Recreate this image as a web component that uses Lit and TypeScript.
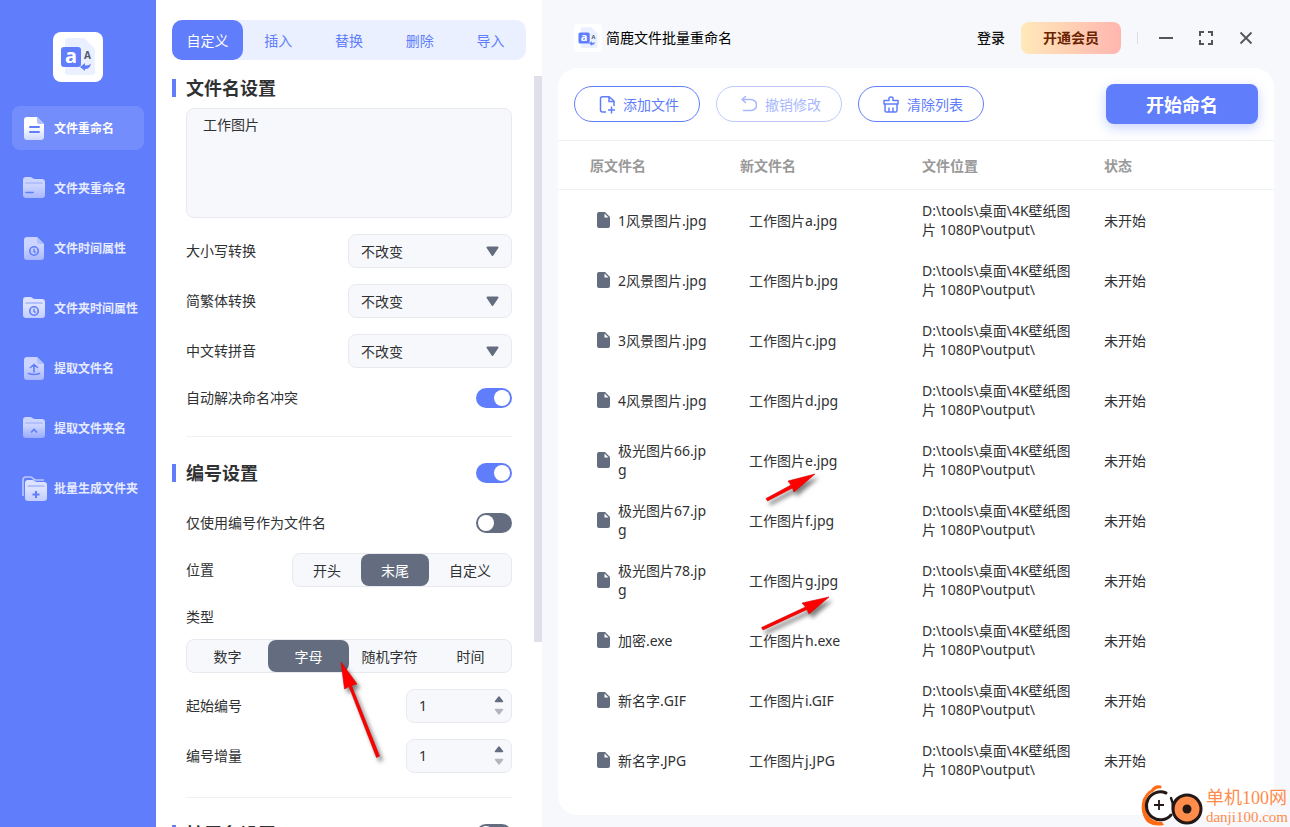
import { LitElement, html, css, svg } from "lit";
import { customElement, property, state } from "lit/decorators.js";
import { classMap } from "lit/directives/class-map.js";

const docBody = svg`
  <path d="M5 1H15L22 8V21A3 3 0 0 1 19 24H5A3 3 0 0 1 2 21V4A3 3 0 0 1 5 1Z" fill="url(#g)"/>
  <path d="M15 1L22 8H17A2 2 0 0 1 15 6Z" fill="#b3c0fe"/>`;
const folderBody = svg`
  <path d="M4 1H8Q9.500 1 10.500 2T13 3H20A3 3 0 0 1 23 6V19A3 3 0 0 1 20 22H4A3 3 0 0 1 1 19V4A3 3 0 0 1 4 1Z" fill="url(#g)"/>
  <path d="M3 8Q3 6 5 6H19Q21 6 21 8" fill="#b3c0fe"/>`;
const clock = svg`
  <circle cx="12" cy="15" r="4.200" fill="none" stroke="#607dfb" stroke-width="1.600"/>
  <path d="M12 12.800V15.300L13.600 16.600" fill="none" stroke="#607dfb" stroke-width="1.400"/>`;

const glyphs: Record<string, unknown> = {
  doc: svg`${docBody}<path d="M8 11H17M8 16H17" stroke="#607dfb" stroke-width="2" stroke-linecap="round"/>`,
  folder: svg`${folderBody}<path d="M4 16.500H11" stroke="#607dfb" stroke-width="1.600" stroke-linecap="round"/>`,
  docTime: svg`${docBody}${clock}`,
  folderTime: svg`${folderBody}${clock}`,
  docOut: svg`${docBody}<path d="M12 16V9M8.500 11.500L12 8.500L15.500 11.500M6.500 17.500Q12 19.500 17.500 17.500" fill="none" stroke="#607dfb" stroke-width="1.600" stroke-linecap="round"/>`,
  folderOut: svg`${folderBody}<path d="M9 16.500L12 13.500L15 16.500" fill="none" stroke="#607dfb" stroke-width="1.600"/>`,
  batch: svg`<path d="M1 20V4Q1 1 4 1H8Q10 1 11 2.500T14 4H22" fill="none" stroke="#bcc8fe" stroke-width="1.600"/>
    <g transform="translate(2 3)">${folderBody}<path d="M12 12V19M8.500 15.500H15.500" stroke="#607dfb" stroke-width="2"/></g>`,
};

const NAV = [
  { icon: "doc", label: "文件重命名", top: "#dce2ff", end: "#b9c6fe" },
  { icon: "folder", label: "文件夹重命名", top: "#ccd5ff", end: "#a9b8fe" },
  { icon: "docTime", label: "文件时间属性", top: "#ccd5ff", end: "#a9b8fe" },
  { icon: "folderTime", label: "文件夹时间属性", top: "#dce2ff", end: "#c2ceff" },
  { icon: "docOut", label: "提取文件名", top: "#ccd5ff", end: "#a9b8fe" },
  { icon: "folderOut", label: "提取文件夹名", top: "#ccd5ff", end: "#9aabfd" },
  { icon: "batch", label: "批量生成文件夹", top: "#dce2ff", end: "#c2ceff" },
];

const FILES = [
  ["1风景图片.jpg", "工作图片a.jpg"],
  ["2风景图片.jpg", "工作图片b.jpg"],
  ["3风景图片.jpg", "工作图片c.jpg"],
  ["4风景图片.jpg", "工作图片d.jpg"],
  ["极光图片66.jpg", "工作图片e.jpg"],
  ["极光图片67.jpg", "工作图片f.jpg"],
  ["极光图片78.jpg", "工作图片g.jpg"],
  ["加密.exe", "工作图片h.exe"],
  ["新名字.GIF", "工作图片i.GIF"],
  ["新名字.JPG", "工作图片j.JPG"],
];

const base = css`
  * { box-sizing: border-box; }
  button, input, select, textarea {
    font: inherit; color: inherit; margin: 0; padding: 0;
    border: 0; background: none; outline: none;
  }
  button { cursor: pointer; }
  svg { display: block; flex: none; }
`;

@customElement("app-logo")
class AppLogo extends LitElement {
  static styles = css`
    :host { display: block; background: #fff; overflow: hidden; }
    svg { display: block; width: 100%; height: 100%; }
    text { font-family: "Noto Sans", "Open Sans", sans-serif; font-weight: 700; }
  `;
  render() {
    return html`<svg viewBox="0 0 50 50" aria-hidden="true">
      <path d="M15 6H31L42 17V40A3 3 0 0 1 39 43H15A3 3 0 0 1 12 40V9A3 3 0 0 1 15 6Z" fill="#eaf0ff"/>
      <rect x="8" y="15" width="20" height="20" rx="3" fill="#607dfb"/>
      <text x="18" y="31" font-size="20" text-anchor="middle" fill="#fff">a</text>
      <text x="34.500" y="27" font-size="10" text-anchor="middle" fill="#505a6e">A</text>
      <path d="M27 35L32 31V33.500Q36 34 38 31.500Q37 37 32 37V39Z" fill="#607dfb"/>
    </svg>`;
  }
}

@customElement("nav-icon")
class NavIcon extends LitElement {
  @property() icon = "doc";
  @property() top = "#fff";
  @property() end = "#fff";
  static styles = css`
    :host { display: block; flex: none; }
    svg { display: block; overflow: visible; }
  `;
  render() {
    return html`<svg width="24" height="24" viewBox="0 0 24 24" aria-hidden="true">
      <defs><linearGradient id="g" x1="0" y1="0" x2="0" y2="1">
        <stop offset="0.400" stop-color=${this.top}/>
        <stop offset="1" stop-color=${this.end}/>
      </linearGradient></defs>
      ${glyphs[this.icon]}
    </svg>`;
  }
}

@customElement("nav-bar")
class NavBar extends LitElement {
  @state() current = 0;
  static styles = [base, css`
    :host { display: flex; flex-direction: column; align-items: center; gap: 24px;
      padding: 32px 12px; background: #607dfb; }
    app-logo { width: 50px; height: 50px; border-radius: 8px; }
    nav { display: flex; flex-direction: column; gap: 16px; align-self: stretch; }
    .item { display: flex; align-items: center; gap: 8px; height: 44px; padding: 0 0 0 10px;
      border-radius: 8px; color: #e6ebff; font-size: 12px; line-height: 18px;
      font-weight: 700; text-decoration: none; white-space: nowrap; }
    .item span { padding-top: 2px; }
    .item.on { background: #738dfc; color: #fff; }
  `];
  render() {
    return html`<app-logo></app-logo>
      <nav>${NAV.map((n, i) => {
        const on = i === this.current;
        return html`<a href="#" class=${classMap({ item: true, on })}
          @click=${(e: Event) => { e.preventDefault(); this.current = i; }}>
          <nav-icon .icon=${n.icon} .top=${on ? "#ffffff" : n.top} .end=${on ? "#cdd7ff" : n.end}></nav-icon>
          <span>${n.label}</span></a>`;
      })}</nav>`;
  }
}

@customElement("toggle-switch")
class ToggleSwitch extends LitElement {
  @property({ type: Boolean }) on = false;
  @property() name = "";
  static styles = [base, css`
    :host { display: block; height: 20px; }
    input { appearance: none; display: flex; align-items: center; width: 36px; height: 20px;
      padding: 2px; border-radius: 10px; background: #646d7f; cursor: pointer; }
    input::before { content: ""; width: 16px; height: 16px; border-radius: 50%; background: #fff; }
    input:checked { background: #607dfb; justify-content: flex-end; }
  `];
  render() {
    return html`<input type="checkbox" role="switch" aria-label=${this.name} .checked=${this.on}>`;
  }
}

@customElement("segmented-control")
class SegmentedControl extends LitElement {
  @property({ attribute: false }) options: string[] = [];
  @property({ type: Number }) value = 0;
  @property({ type: Boolean, reflect: true }) fill = false;
  static styles = [base, css`
    :host { display: flex; height: 34px; border: 1px solid #e9eaef; border-radius: 8px;
      background: #f7f8fc; color: #303133; }
    button { height: 32px; padding: 2px 20px 0; border-radius: 8px; font-size: 14px;
      line-height: 20px; white-space: nowrap; }
    :host([fill]) button { flex: 1 1 0; padding: 2px 0 0; }
    .on { background: #646d7f; color: #fff; }
  `];
  render() {
    return this.options.map((o, i) => html`<button type="button"
      class=${i === this.value ? "on" : ""} aria-pressed=${i === this.value}
      @click=${() => { this.value = i; }}>${o}</button>`);
  }
}

@customElement("settings-panel")
class SettingsPanel extends LitElement {
  @state() tab = 0;
  static styles = [base, css`
    :host { display: flex; flex-direction: column; min-height: 0; gap: 16px; padding-top: 20px;
      background: #fff; color: #303133; font-size: 14px; line-height: 20px; }
    .tabs { display: flex; height: 40px; margin: 0 16px; border-radius: 10px; background: #eaf0ff;
      color: #607dfb; }
    .tabs button { flex: 1 1 0; padding-top: 2px; border-radius: 10px; }
    .tabs .on { background: #607dfb; color: #fff; }
    .body { display: grid; grid-template-columns: 1fr 8px; flex: 1; min-height: 0; }
    .scroll { overflow-y: auto; scrollbar-width: none; padding: 0 22px 0 30px; }
    .thumb { height: 566px; background: #dfe0ea; }
    section { display: flex; flex-direction: column; gap: 16px; padding-bottom: 24px; }
    section + section { border-top: 1px solid #eff0f2; padding-top: 24px; }
    h2 { display: flex; align-items: center; justify-content: space-between; height: 24px;
      margin: 0 0 0 -14px; font-size: 18px; line-height: 24px; font-weight: 700; color: #303133; }
    .name { display: flex; align-items: center; gap: 10px; }
    .name::before { content: ""; width: 4px; height: 18px; background: #607dfb; }
    .first h2 { margin-bottom: -8px; }
    .numbering h2 { margin-bottom: 8px; }
    textarea { display: block; width: 100%; height: 110px; padding: 6px 16px; resize: none;
      border: 1px solid #e9eaef; border-radius: 8px; background: #f7f8fc; }
    .row { display: flex; align-items: center; justify-content: space-between; min-height: 28px; }
    .stack { display: flex; flex-direction: column; gap: 8px; }
    .pick { position: relative; width: 164px; }
    select { appearance: none; display: block; width: 100%; height: 34px; padding: 2px 12px 0;
      border: 1px solid #e9eaef; border-radius: 8px; background: #f7f8fc; }
    .pick svg { position: absolute; right: 13px; top: 12px; pointer-events: none; }
    .num { display: flex; align-items: center; width: 106px; height: 34px; padding: 0 6px 0 12px;
      border: 1px solid #e9eaef; border-radius: 8px; background: #f7f8fc; }
    .num input { flex: 1; min-width: 0; appearance: textfield; }
    .num input::-webkit-inner-spin-button { display: none; }
    .spin { display: flex; flex-direction: column; gap: 4px; }
    .spin button { display: block; width: 12px; height: 8px; }
  `];
  pick(id: string, label: string) {
    return html`<div class="row"><label for=${id}>${label}</label>
      <span class="pick"><select id=${id}><option>不改变</option></select>
        <svg width="13" height="11" viewBox="0 0 13 11" aria-hidden="true"><path d="M1.500 1.500H11.500L6.500 9Z" fill="#646d7f" stroke="#646d7f" stroke-width="2" stroke-linejoin="round"/></svg>
      </span></div>`;
  }
  step(e: Event, d: number) {
    const input = (e.currentTarget as HTMLElement).closest(".num")!.querySelector("input")!;
    d > 0 ? input.stepUp() : input.stepDown();
  }
  num(id: string, label: string) {
    return html`<div class="row"><label for=${id}>${label}</label>
      <span class="num"><input id=${id} type="number" min="1" value="1">
        <span class="spin">
          <button type="button" aria-label="增加" @click=${(e: Event) => this.step(e, 1)}><svg width="12" height="8" viewBox="0 0 12 8"><path d="M2.500 5.500H9.500L6 1Z" fill="#646d7f" stroke="#646d7f" stroke-width="1.500" stroke-linejoin="round"/></svg></button>
          <button type="button" aria-label="减少" @click=${(e: Event) => this.step(e, -1)}><svg width="12" height="8" viewBox="0 0 12 8"><path d="M2.500 1.500H9.500L6 6Z" fill="#b2b6bf" stroke="#b2b6bf" stroke-width="1.500" stroke-linejoin="round"/></svg></button>
        </span></span></div>`;
  }
  render() {
    return html`
      <div class="tabs" role="tablist">${["自定义", "插入", "替换", "删除", "导入"].map((t, i) => html`
        <button type="button" role="tab" aria-selected=${i === this.tab} class=${i === this.tab ? "on" : ""}
          @click=${() => { this.tab = i; }}>${t}</button>`)}</div>
      <div class="body">
        <div class="scroll">
          <section class="first">
            <h2><span class="name">文件名设置</span></h2>
            <textarea aria-label="文件名" .value=${"工作图片"}></textarea>
            ${this.pick("case", "大小写转换")}
            ${this.pick("hans", "简繁体转换")}
            ${this.pick("pinyin", "中文转拼音")}
            <div class="row"><span>自动解决命名冲突</span><toggle-switch on name="自动解决命名冲突"></toggle-switch></div>
          </section>
          <section class="numbering">
            <h2><span class="name">编号设置</span><toggle-switch on name="编号设置"></toggle-switch></h2>
            <div class="row"><span>仅使用编号作为文件名</span><toggle-switch name="仅使用编号作为文件名"></toggle-switch></div>
            <div class="row"><span>位置</span><segmented-control .options=${["开头", "末尾", "自定义"]} .value=${1}></segmented-control></div>
            <div class="stack">
              <div class="row"><span>类型</span></div>
              <segmented-control fill .options=${["数字", "字母", "随机字符", "时间"]} .value=${1}></segmented-control>
            </div>
            ${this.num("start", "起始编号")}
            ${this.num("inc", "编号增量")}
          </section>
          <section>
            <h2><span class="name">扩展名设置</span><toggle-switch name="扩展名设置"></toggle-switch></h2>
          </section>
        </div>
        <div class="thumb"></div>
      </div>`;
  }
}

@customElement("file-panel")
class FilePanel extends LitElement {
  static styles = [base, css`
    :host { display: flex; flex-direction: column; min-width: 0; min-height: 0; padding: 22px 16px 12px;
      font-size: 14px; line-height: 20px; color: #303133; }
    header { display: flex; align-items: center; gap: 16px; height: 32px; margin-bottom: 14px; padding: 0 16px; }
    .brand { display: flex; align-items: center; gap: 4px; margin-right: auto; color: #000; }
    app-logo { width: 28px; height: 28px; border-radius: 4px; }
    .login { color: #111; font-weight: 500; }
    .vip { width: 100px; height: 32px; border-radius: 8px; color: #6b2400; font-weight: 700;
      background: linear-gradient(90deg, #ffe9b9, #ffb6b0); }
    .bar { width: 1px; height: 12px; background: #dcdde2; }
    .win { width: 24px; height: 24px; color: #555; }
    .card { display: flex; flex-direction: column; flex: 1; min-height: 0; overflow: hidden;
      border-radius: 20px; background: #fff; }
    .tools { display: flex; align-items: center; gap: 16px; height: 73px; padding: 0 16px;
      border-bottom: 1px solid #eff0f2; }
    .pill { display: flex; align-items: center; justify-content: center; gap: 8px; width: 126px; height: 36px;
      border: 1px solid #607dfb; border-radius: 18px; color: #607dfb; white-space: nowrap; }
    .pill span { padding-top: 2px; }
    .pill:disabled { border-color: #bcc8fe; color: #a9b8fd; }
    .start { width: 152px; height: 40px; margin-left: auto; padding-top: 2px; border-radius: 8px;
      background: #607dfb; color: #fff; font-size: 18px; line-height: 26px; font-weight: 700;
      box-shadow: 0 4px 12px rgba(96, 125, 251, .35); }
    table { width: 100%; border-collapse: separate; border-spacing: 0; table-layout: fixed; }
    .c1 { width: 166px; } .c2, .c3 { width: 182px; }
    th { height: 49px; padding: 2px 16px 0; text-align: left; font-weight: 700; color: #999;
      border-bottom: 1px solid #eff0f2; }
    th:first-child { padding-left: 32px; }
    td { height: 60px; padding: 0 12px 0 16px; line-height: 19px; word-break: break-all; }
    td:first-child { padding: 0 16px 0 38px; }
    td:nth-child(2) { padding-left: 25px; }
    .file { display: flex; align-items: center; gap: 8px; }
  `];
  render() {
    return html`
      <header>
        <span class="brand"><app-logo></app-logo>简鹿文件批量重命名</span>
        <button type="button" class="login">登录</button>
        <button type="button" class="vip">开通会员</button>
        <span class="bar"></span>
        <button type="button" class="win" aria-label="最小化"><svg width="24" height="24" viewBox="0 0 24 24"><path d="M5 12H19" stroke="currentColor" stroke-width="2"/></svg></button>
        <button type="button" class="win" aria-label="最大化"><svg width="24" height="24" viewBox="0 0 24 24"><path d="M6 10V6H10M14 6H18V10M18 14V18H14M10 18H6V14" fill="none" stroke="currentColor" stroke-width="2"/></svg></button>
        <button type="button" class="win" aria-label="关闭"><svg width="24" height="24" viewBox="0 0 24 24"><path d="M6.500 6.500L17.500 17.500M17.500 6.500L6.500 17.500" stroke="currentColor" stroke-width="1.800"/></svg></button>
      </header>
      <div class="card">
        <div class="tools">
          <button type="button" class="pill"><svg width="20" height="20" viewBox="0 0 20 20" fill="none" stroke="currentColor" stroke-width="1.500"><path d="M11 18H7.500Q5.500 18 5.500 16V4.800Q5.500 2.800 7.500 2.800H14L19 7V12M14 3V7.500H19M16.500 12.500V19.500M13 16H20"/></svg><span>添加文件</span></button>
          <button type="button" class="pill" disabled><svg width="20" height="20" viewBox="0 0 20 20" fill="none" stroke="currentColor" stroke-width="1.600" stroke-linecap="round" stroke-linejoin="round"><path d="M8.500 2.500L5 5.500L8.500 8.500M5.500 5.500H14Q19.500 6 19.500 11T14 16.500H6.500"/></svg><span>撤销修改</span></button>
          <button type="button" class="pill"><svg width="20" height="20" viewBox="0 0 20 20" fill="none" stroke="currentColor" stroke-width="1.500" stroke-linejoin="round"><path d="M5 10V6.500H10V4Q10 3 12 3T14 4V6.500H19V10ZM6 10V16.500Q6 18 7.500 18H16.500Q18 18 18 16.500V10M10 13.500V18M14 13.500V18"/></svg><span>清除列表</span></button>
          <button type="button" class="start">开始命名</button>
        </div>
        <table>
          <colgroup><col class="c1"><col class="c2"><col class="c3"><col></colgroup>
          <thead><tr><th>原文件名</th><th>新文件名</th><th>文件位置</th><th>状态</th></tr></thead>
          <tbody>${FILES.map(([from, to]) => html`<tr>
            <td><div class="file"><svg width="14" height="16" viewBox="0 0 14 16" aria-hidden="true"><path d="M3 0H9L14 5V14A2 2 0 0 1 12 16H3A2 2 0 0 1 1 14V2A2 2 0 0 1 3 0Z" fill="#646d7f"/><path d="M8.500 1.500V5.500H12.500Z" fill="#fff"/></svg><span>${from}</span></div></td>
            <td>${to}</td><td>D:\\tools\\桌面\\4K壁纸图片 1080P\\output\\</td><td>未开始</td></tr>`)}</tbody>
        </table>
      </div>`;
  }
}

@customElement("app-root")
class AppRoot extends LitElement {
  static styles = [base, css`
    :host { position: relative; display: grid; grid-template-columns: 156px 386px 1fr;
      grid-template-rows: 100vh; height: 100vh; overflow: hidden; background: #f7f8fc;
      font-family: "Noto Sans", "Noto Sans CJK SC", sans-serif; }
    .marks { position: absolute; inset: 0; width: 100%; height: 100%; pointer-events: none;
      filter: drop-shadow(3px 4px 2px rgba(0, 0, 0, .5)); }
    .stamp { position: absolute; right: 2px; bottom: 0; display: flex; align-items: center; gap: 3px;
      color: #ff8c4b; pointer-events: none;
      font-family: "Liberation Serif", "Noto Sans CJK SC", serif; white-space: nowrap; }
    .words { display: flex; flex-direction: column; }
    .big { font-size: 18px; line-height: 22px; }
    .small { font-size: 15px; line-height: 16px; }
  `];
  render() {
    return html`
      <nav-bar></nav-bar>
      <settings-panel></settings-panel>
      <file-panel></file-panel>
      <svg class="marks" aria-hidden="true">
        <g stroke="#d00000" stroke-width="0.600" fill="#ff0000">
          <path d="M341 662L357 684L351.500 685.500L379.500 756L376.500 757.500L349 686.500L344.500 689Z"/>
          <path d="M815 474L794 492L792.500 488L767.500 501L766 498.500L791 485L788 481Z"/>
          <path d="M829 597L809 614L807 609.500L763 630L761.500 627.500L805.500 607L802 603Z"/>
        </g>
      </svg>
      <div class="stamp">
        <svg width="63" height="42" viewBox="0 0 63 42" aria-hidden="true">
          <path d="M19 3Q8 3 3 14Q-1 27 7 37Q14 42 24 40L22 37Q12 37 7 29Q2 15 12 7Q16 4 19 3Z" fill="#ff6a13"/>
          <path d="M12 6Q15 1 20 2" fill="none" stroke="#ff6a13" stroke-width="3" stroke-linecap="round"/>
          <path d="M26 8A14 14 0 1 0 31 30" fill="#fff" stroke="#231815" stroke-width="3" stroke-linecap="round"/>
          <path d="M19 15V25M14 20H24" stroke="#231815" stroke-width="1.800"/>
          <circle cx="47" cy="24" r="14" fill="#ff8c4b" stroke="#231815" stroke-width="3"/>
          <circle cx="47" cy="24" r="4.500" fill="#231815"/>
          <path d="M31 13Q33 17 33 23M38 13Q33 16 33 24" fill="none" stroke="#231815" stroke-width="2.500" stroke-linecap="round"/>
        </svg>
        <div class="words"><span class="big">单机100网</span><span class="small">danji100.com</span></div>
      </div>`;
  }
}
